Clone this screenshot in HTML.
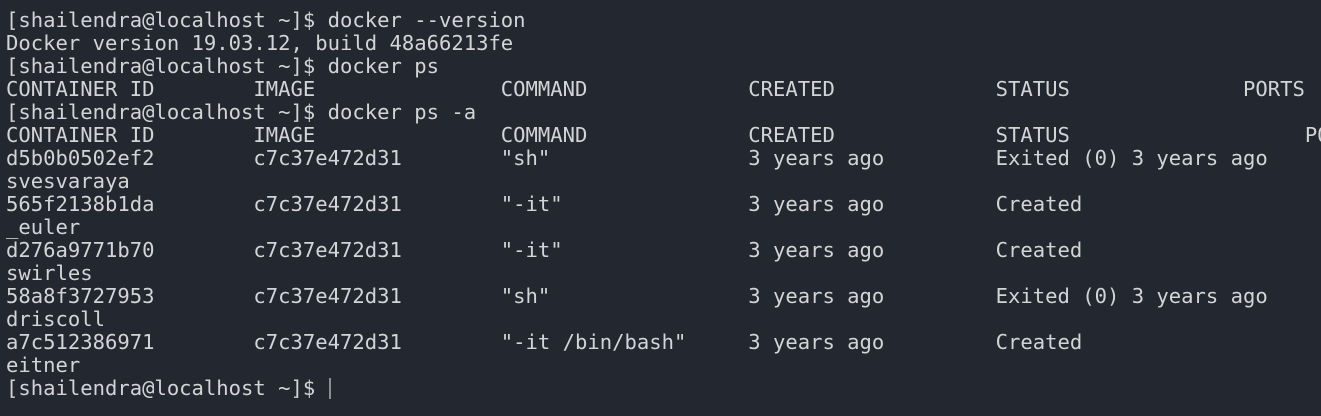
<!DOCTYPE html>
<html><head><meta charset="utf-8"><style>
html,body{margin:0;padding:0;background:#23272f;width:1321px;height:416px;overflow:hidden}
pre{margin:0;padding:9px 0 0 6px;font-family:"DejaVu Sans Mono",monospace;font-size:20.55px;line-height:23px;color:#d3d4d6;white-space:pre}
.c{display:inline-block;width:2px;height:21px;background:#8a8d92;vertical-align:-4px;margin-left:1px}
</style></head><body><pre>[shailendra@localhost ~]$ docker --version
Docker version 19.03.12, build 48a66213fe
[shailendra@localhost ~]$ docker ps
CONTAINER ID        IMAGE               COMMAND             CREATED             STATUS              PORTS
[shailendra@localhost ~]$ docker ps -a
CONTAINER ID        IMAGE               COMMAND             CREATED             STATUS                   PORTS
d5b0b0502ef2        c7c37e472d31        "sh"                3 years ago         Exited (0) 3 years ago
svesvaraya
565f2138b1da        c7c37e472d31        "-it"               3 years ago         Created
_euler
d276a9771b70        c7c37e472d31        "-it"               3 years ago         Created
swirles
58a8f3727953        c7c37e472d31        "sh"                3 years ago         Exited (0) 3 years ago
driscoll
a7c512386971        c7c37e472d31        "-it /bin/bash"     3 years ago         Created
eitner
[shailendra@localhost ~]$ <span class="c"></span></pre></body></html>
